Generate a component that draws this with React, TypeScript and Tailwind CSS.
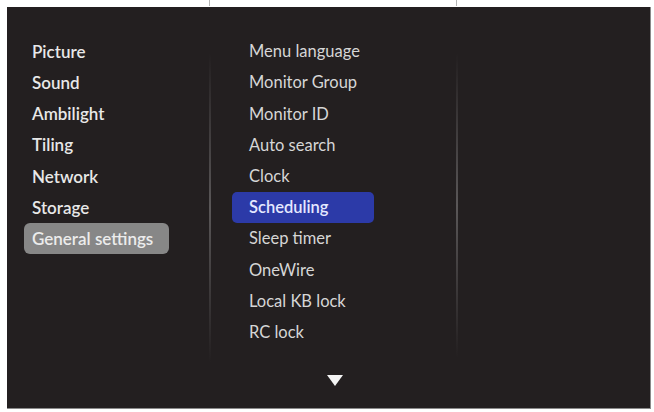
const mainItems = [
  "Picture",
  "Sound",
  "Ambilight",
  "Tiling",
  "Network",
  "Storage",
  "General settings",
];

const subItems = [
  "Menu language",
  "Monitor Group",
  "Monitor ID",
  "Auto search",
  "Clock",
  "Scheduling",
  "Sleep timer",
  "OneWire",
  "Local KB lock",
  "RC lock",
];

function Divider({ height }: { height: string }) {
  return (
    <div
      className={`w-[2px] mt-[46px] ${height} bg-gradient-to-b from-transparent via-[#5a5758] to-transparent`}
    />
  );
}

export default function App() {
  return (
    <div
      className="w-[654px] h-[412px] bg-white overflow-hidden"
      style={{ fontFamily: "Lato, 'Open Sans', sans-serif" }}
    >
      {/* top ticks */}
      <div className="flex h-[7px]">
        <div className="w-[209px]" />
        <div className="w-px h-[6px] bg-[#b5b5b5]" />
        <div className="w-[246px]" />
        <div className="w-px h-[6px] bg-[#b5b5b5]" />
      </div>

      <div className="ml-[7px] w-[644px] h-[402px] bg-[#231f20] border-b border-r border-[#8a8a8a] flex">
        {/* left menu */}
        <div className="w-[202px] pl-[17px] pt-[29px] flex flex-col">
          {mainItems.map((item) => {
            const active = item === "General settings";
            return (
              <div
                key={item}
                className={`h-[31.2px] flex items-center px-[8px] rounded-[6px] w-fit whitespace-nowrap text-[17px] font-semibold ${
                  active
                    ? "bg-[#878787] text-[#ececec] pr-[16px]"
                    : "text-[#e8e8e8]"
                }`}
              >
                {item}
              </div>
            );
          })}
        </div>

        <Divider height="h-[310px]" />

        {/* sub menu */}
        <div className="w-[245px] pl-[21px] pt-[29px] flex flex-col">
          {subItems.map((item) => {
            const active = item === "Scheduling";
            return (
              <div
                key={item}
                className={`h-[31.2px] w-[142px] flex items-center pl-[17px] rounded-[5px] whitespace-nowrap text-[16.5px] ${
                  active
                    ? "bg-[#2c3aa8] text-[#e4e8ff] font-semibold"
                    : "text-[#d6d6d6]"
                }`}
              >
                {item}
              </div>
            );
          })}
          <div className="flex justify-center w-[248px] -ml-[21px] mt-[27px]">
            <svg width="16" height="11" viewBox="0 0 16 11">
              <polygon points="0,0 16,0 8,11" fill="#f4f4f4" />
            </svg>
          </div>
        </div>

        <Divider height="h-[305px]" />

        <div className="flex-1" />
      </div>
    </div>
  );
}
